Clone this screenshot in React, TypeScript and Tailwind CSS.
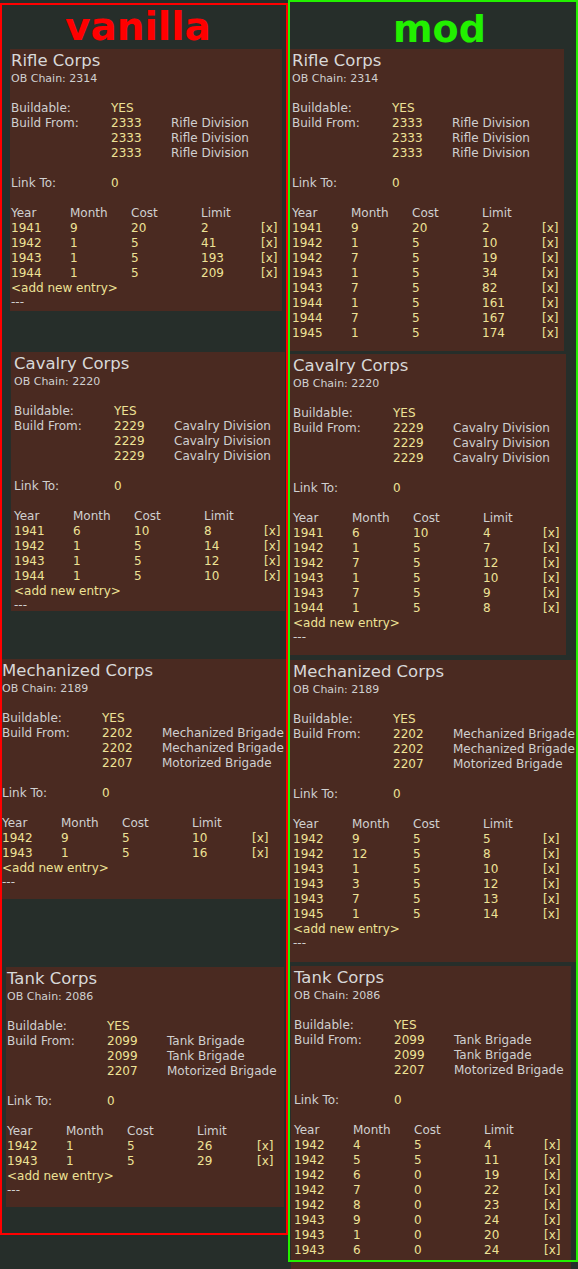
import React from 'react';

type Unit = [string, string];
type Row = [string, string, string, string];

interface CorpsPanelProps {
  title: string;
  chain: string;
  units: Unit[];
  rows: Row[];
  footer?: boolean;
  className: string;
}

function Line({ children, className = '' }: { children?: React.ReactNode; className?: string }) {
  return <div className={`flex h-[15px] whitespace-nowrap text-[12px] leading-[15px] ${className}`}>{children}</div>;
}

function CorpsPanel({ title, chain, units, rows, footer = true, className }: CorpsPanelProps) {
  return (
    <div className={`shrink-0 overflow-hidden bg-[#4a2a21] pt-[2px] text-[#d0d0d0] ${className}`}>
      <div className="whitespace-nowrap text-[16.5px] leading-[20px] text-[#d8d8d8]">{title}</div>
      <div className="whitespace-nowrap text-[11px] leading-[15px]">OB Chain: {chain}</div>
      <Line />
      <Line>
        <span className="w-[100px] shrink-0">Buildable:</span>
        <span className="text-[#eee296]">YES</span>
      </Line>
      {units.map(([code, name], i) => (
        <Line key={i}>
          <span className="w-[100px] shrink-0">{i === 0 ? 'Build From:' : ''}</span>
          <span className="w-[60px] shrink-0 text-[#eee296]">{code}</span>
          <span>{name}</span>
        </Line>
      ))}
      <Line />
      <Line>
        <span className="w-[100px] shrink-0">Link To:</span>
        <span className="text-[#eee296]">0</span>
      </Line>
      <Line />
      <Line>
        <span className="w-[59px] shrink-0">Year</span>
        <span className="w-[61px] shrink-0">Month</span>
        <span className="w-[70px] shrink-0">Cost</span>
        <span className="w-[60px] shrink-0">Limit</span>
      </Line>
      {rows.map((r, i) => (
        <Line key={i} className="text-[#eee296]">
          <span className="w-[59px] shrink-0">{r[0]}</span>
          <span className="w-[61px] shrink-0">{r[1]}</span>
          <span className="w-[70px] shrink-0">{r[2]}</span>
          <span className="w-[60px] shrink-0">{r[3]}</span>
          <span>[x]</span>
        </Line>
      ))}
      {footer && (
        <>
          <Line className="text-[#eee296]">&lt;add new entry&gt;</Line>
          <div className="h-[12px] whitespace-nowrap text-[12px] leading-[12px]">---</div>
        </>
      )}
    </div>
  );
}

const rifle: Unit[] = [
  ['2333', 'Rifle Division'],
  ['2333', 'Rifle Division'],
  ['2333', 'Rifle Division'],
];
const cavalry: Unit[] = [
  ['2229', 'Cavalry Division'],
  ['2229', 'Cavalry Division'],
  ['2229', 'Cavalry Division'],
];
const mech: Unit[] = [
  ['2202', 'Mechanized Brigade'],
  ['2202', 'Mechanized Brigade'],
  ['2207', 'Motorized Brigade'],
];
const tank: Unit[] = [
  ['2099', 'Tank Brigade'],
  ['2099', 'Tank Brigade'],
  ['2207', 'Motorized Brigade'],
];

export default function App() {
  return (
    <div className="relative flex h-[1269px] w-[578px] overflow-hidden bg-[#262e2a] font-['DejaVu_Sans',sans-serif]">
      {/* vanilla */}
      <div className="flex w-[288px] shrink-0 flex-col">
        <div className="h-[49px] shrink-0 pl-[65px] pt-[7px] text-[39px] font-bold leading-[39px] text-[#ff0000]">vanilla</div>
        <CorpsPanel
          title="Rifle Corps"
          chain="2314"
          units={rifle}
          rows={[
            ['1941', '9', '20', '2'],
            ['1942', '1', '5', '41'],
            ['1943', '1', '5', '193'],
            ['1944', '1', '5', '209'],
          ]}
          className="ml-[10px] h-[262px] w-[272px] pl-[1px]"
        />
        <CorpsPanel
          title="Cavalry Corps"
          chain="2220"
          units={cavalry}
          rows={[
            ['1941', '6', '10', '8'],
            ['1942', '1', '5', '14'],
            ['1943', '1', '5', '12'],
            ['1944', '1', '5', '10'],
          ]}
          className="ml-[11px] mt-[41px] h-[259px] w-[274px] pl-[3px]"
        />
        <CorpsPanel
          title="Mechanized Corps"
          chain="2189"
          units={mech}
          rows={[
            ['1942', '9', '5', '10'],
            ['1943', '1', '5', '16'],
          ]}
          className="mt-[48px] h-[240px] w-[288px] pl-[2px]"
        />
        <CorpsPanel
          title="Tank Corps"
          chain="2086"
          units={tank}
          rows={[
            ['1942', '1', '5', '26'],
            ['1943', '1', '5', '29'],
          ]}
          className="ml-[6px] mt-[68px] h-[240px] w-[278px] pl-[1px]"
        />
      </div>

      {/* mod */}
      <div className="flex w-[290px] shrink-0 flex-col">
        <div className="h-[49px] shrink-0 pl-[105px] pt-[10px] text-[38px] font-bold leading-[38px] text-[#22f000]">mod</div>
        <CorpsPanel
          title="Rifle Corps"
          chain="2314"
          units={rifle}
          footer={false}
          rows={[
            ['1941', '9', '20', '2'],
            ['1942', '1', '5', '10'],
            ['1942', '7', '5', '19'],
            ['1943', '1', '5', '34'],
            ['1943', '7', '5', '82'],
            ['1944', '1', '5', '161'],
            ['1944', '7', '5', '167'],
            ['1945', '1', '5', '174'],
          ]}
          className="ml-[2px] h-[302px] w-[274px] pl-[2px]"
        />
        <CorpsPanel
          title="Cavalry Corps"
          chain="2220"
          units={cavalry}
          rows={[
            ['1941', '6', '10', '4'],
            ['1942', '1', '5', '7'],
            ['1942', '7', '5', '12'],
            ['1943', '1', '5', '10'],
            ['1943', '7', '5', '9'],
            ['1944', '1', '5', '8'],
          ]}
          className="ml-[2px] mt-[3px] h-[301px] w-[276px] pl-[3px]"
        />
        <CorpsPanel
          title="Mechanized Corps"
          chain="2189"
          units={mech}
          rows={[
            ['1942', '9', '5', '5'],
            ['1942', '12', '5', '8'],
            ['1943', '1', '5', '10'],
            ['1943', '3', '5', '12'],
            ['1943', '7', '5', '13'],
            ['1945', '1', '5', '14'],
          ]}
          className="ml-[2px] mt-[5px] h-[302px] w-[288px] pl-[3px]"
        />
        <CorpsPanel
          title="Tank Corps"
          chain="2086"
          units={tank}
          footer={false}
          rows={[
            ['1942', '4', '5', '4'],
            ['1942', '5', '5', '11'],
            ['1942', '6', '0', '19'],
            ['1942', '7', '0', '22'],
            ['1942', '8', '0', '23'],
            ['1943', '9', '0', '24'],
            ['1943', '1', '0', '20'],
            ['1943', '6', '0', '24'],
          ]}
          className="ml-[3px] mt-[4px] h-[310px] w-[280px] pl-[3px]"
        />
      </div>

      {/* comparison frames drawn over both columns */}
      <div className="pointer-events-none absolute left-0 top-[3px] h-[1232px] w-[288px] border-2 border-[#ff0000]" />
      <div className="pointer-events-none absolute left-[288px] top-0 h-[1262px] w-[290px] border-2 border-[#22f000]" />
    </div>
  );
}
